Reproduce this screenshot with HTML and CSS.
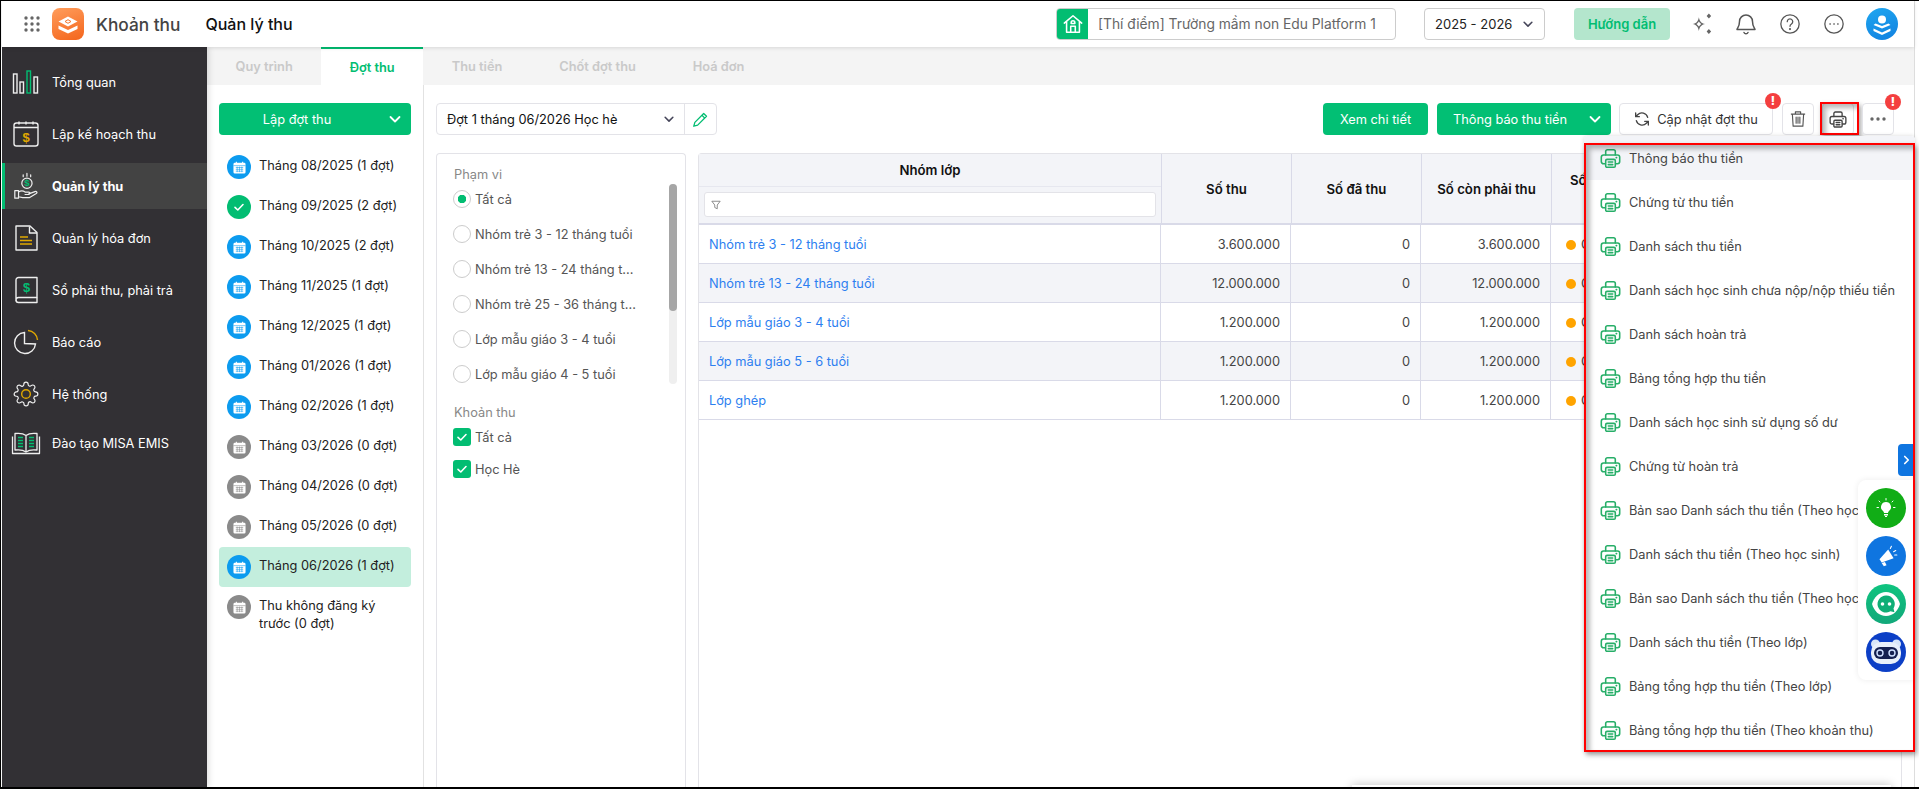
FILE: index.html
```html
<!DOCTYPE html>
<html lang="vi">
<head>
  <meta charset="UTF-8">
  <title>Khoản thu - Quản lý thu</title>
  <link rel="stylesheet" href="styles.css">
</head>
<body>

<!-- shared icons -->
<svg class="sprite" xmlns="http://www.w3.org/2000/svg">
  <symbol id="i-print" viewBox="0 0 24 24">
    <g fill="none" stroke="currentColor" stroke-width="1.8" stroke-linejoin="round" stroke-linecap="round">
      <path d="M6.5 8V4a2 2 0 0 1 2-2h7a2 2 0 0 1 2 2v4"/>
      <path d="M6 18H4a2.5 2.5 0 0 1-2.5-2.5V10.5A2.5 2.5 0 0 1 4 8h16a2.5 2.5 0 0 1 2.5 2.5V15.5A2.5 2.5 0 0 1 20 18h-2"/>
      <rect x="6.5" y="13" width="11" height="9" rx="1.5"/>
      <path d="M9.5 16h5M9.5 19h5M18.5 11h.5"/>
    </g>
  </symbol>
  <symbol id="i-cal" viewBox="0 0 14 14">
    <path fill="#fff" d="M3 .8h1.2V2h5.6V.8H11V2h1a1.5 1.5 0 0 1 1.5 1.5V12a1.5 1.5 0 0 1-1.500 1.5H2A1.5 1.5 0 0 1 .5 12V3.500A1.5 1.5 0 0 1 2 2h1z"/>
    <path fill="none" stroke="currentColor" stroke-width=".6" d="M.5 5h13M3 7h8M3 9h8M3 11h8M4.5 6v6M7 6v6M9.5 6v6"/>
  </symbol>
  <symbol id="i-check" viewBox="0 0 14 14">
    <path fill="none" stroke="#fff" stroke-width="1.6" stroke-linecap="round" stroke-linejoin="round" d="M3 7.3l2.8 2.7L11 4.5"/>
  </symbol>
  <symbol id="i-chev" viewBox="0 0 14 14">
    <path fill="none" stroke="currentColor" stroke-width="1.8" stroke-linecap="round" stroke-linejoin="round" d="M2.5 5l4.5 4.5L11.5 5"/>
  </symbol>
</svg>

<div class="app">
  <div class="window">

    <header class="topbar">
      <svg class="apps-icon" viewBox="0 0 16 16" width="16" height="16" fill="#666">
        <circle cx="2" cy="2" r="1.7"/><circle cx="8" cy="2" r="1.7"/><circle cx="14" cy="2" r="1.7"/>
        <circle cx="2" cy="8" r="1.7"/><circle cx="8" cy="8" r="1.7"/><circle cx="14" cy="8" r="1.7"/>
        <circle cx="2" cy="14" r="1.7"/><circle cx="8" cy="14" r="1.7"/><circle cx="14" cy="14" r="1.7"/>
      </svg>
      <span class="logo">
        <svg viewBox="0 0 32 32" width="32" height="32">
          <path fill="#fff" d="M6.5 17.5l9.5 4.5 9.5-4.5V21L16 25.5 6.500 21z"/>
          <path fill="#fff" d="M16 8.500l9.500 5L16 18.500l-9.500-5z"/>
          <path fill="none" stroke="#f4762b" stroke-width="1" d="M13 13.500l3-1.800 3 1.800-3 1.800z"/>
        </svg>
      </span>
      <span class="app-name">Khoản thu</span>
      <span class="page-name">Quản lý thu</span>

      <div class="school">
        <span class="school-icon">
          <svg viewBox="0 0 24 24" width="22" height="22" fill="none" stroke="#fff" stroke-width="1.7" stroke-linejoin="round" stroke-linecap="round">
            <path d="M2.5 11L12 3l9.5 8M5 9.5V21h14V9.5"/>
            <path d="M9.5 21v-6.5h5V21M10 10.5a2 2 0 1 1 4 0v1h-4z"/>
          </svg>
        </span>
        <span class="school-name">[Thí điểm] Trường mầm non Edu Platform 1</span>
      </div>
      <div class="year">
        <span>2025 - 2026</span>
        <svg class="chev-sm" width="12" height="12"><use href="#i-chev"/></svg>
      </div>
      <button class="guide">Hướng dẫn</button>

      <span class="top-icon">
        <svg viewBox="0 0 24 24" width="30" height="30" fill="#666">
          <path d="M9.5 6.5c.6 3.400 2 4.800 5 5.500-3 .7-4.400 2.100-5 5.500-.6-3.400-2-4.800-5-5.500 3-.7 4.400-2.100 5-5.500zM9.500 10l-.9 1.100-1 .9 1 .9.9 1.100.9-1.100 1-.9-1-.9z" fill-rule="evenodd"/>
          <path d="M17.500 3.500l1.800 2-1.800 2-1.800-2zM17.500 16l1.800 2-1.800 2-1.800-2z"/>
        </svg>
      </span>
      <span class="top-icon">
        <svg viewBox="0 0 24 24" width="24" height="24" fill="none" stroke="#555" stroke-width="1.5" stroke-linecap="round" stroke-linejoin="round">
          <path d="M12 3a6.500 6.500 0 0 0-6.500 6.500c0 5-2 6.500-2.500 8h18c-.5-1.500-2.500-3-2.500-8A6.500 6.500 0 0 0 12 3z"/>
          <path d="M10 20.500a2.200 2.200 0 0 0 4 0"/>
        </svg>
      </span>
      <span class="top-icon">
        <svg viewBox="0 0 24 24" width="22" height="22" fill="none" stroke="#555" stroke-width="1.4" stroke-linecap="round">
          <circle cx="12" cy="12" r="10"/>
          <path d="M9 9.500a3 3 0 1 1 4.600 2.500c-1 .7-1.600 1.200-1.600 2.500"/>
          <circle cx="12" cy="17.500" r=".5"/>
        </svg>
      </span>
      <span class="top-icon">
        <svg viewBox="0 0 24 24" width="22" height="22" fill="none" stroke="#555" stroke-width="1.4">
          <circle cx="12" cy="12" r="10"/>
          <path d="M7.500 12h.5M11.800 12h.5M16 12h.5" stroke-linecap="round"/>
        </svg>
      </span>
      <span class="avatar">
        <svg viewBox="0 0 32 32" width="32" height="32" fill="#fff">
          <circle cx="16" cy="11.500" r="4"/>
          <path d="M7.500 17l8.500 3.500 8.500-3.500-2-1.500-6.500 2.500-6.500-2.500z"/>
          <path d="M7.500 20.500l8.500 4 8.500-4V23L16 27l-8.500-4z"/>
        </svg>
      </span>
    </header>

    <div class="shell">
      <nav class="sidebar">
        <a class="nav-item">
          <svg class="nav-icon" viewBox="0 0 30 28" fill="none" stroke="#eee" stroke-width="1.4">
            <rect x="2.5" y="6" width="3.5" height="19"/><rect x="9" y="14" width="3.5" height="11"/>
            <rect x="16" y="3" width="3.5" height="22" stroke="#02bd72"/><rect x="23" y="9" width="3.5" height="16"/>
          </svg>
          <span>Tổng quan</span>
        </a>
        <a class="nav-item">
          <svg class="nav-icon" viewBox="0 0 30 28" fill="none" stroke="#eee" stroke-width="1.4">
            <rect x="3" y="3" width="24" height="23" rx="2.5"/>
            <path d="M3 7.500h24M8 1.500v3M15 1.500v3M22 1.500v3"/>
            <text class="nav-glyph" x="15" y="22" fill="#e0a800" stroke="none">$</text>
          </svg>
          <span>Lập kế hoạch thu</span>
        </a>
        <a class="nav-item active">
          <svg class="nav-icon" viewBox="0 0 30 30" fill="none" stroke="#eee" stroke-width="1.3" stroke-linecap="round" stroke-linejoin="round">
            <circle cx="16" cy="12" r="5.5"/>
            <text class="nav-glyph-sm" x="16" y="15.500" fill="#02bd72" stroke="none">$</text>
            <path d="M16 1.500v3M12 3v2M20 3v2"/>
            <path d="M3 20h4v8H3zM7 21.500c3-2 5-1.500 7 0h4a1.300 1.300 0 0 1 0 2.600h-4M18 23.500l6.500-2.500c2-.6 3 1 1.500 2l-7.500 4.500h-7L7 26.500"/>
          </svg>
          <span>Quản lý thu</span>
        </a>
        <a class="nav-item">
          <svg class="nav-icon" viewBox="0 0 30 28" fill="none" stroke="#eee" stroke-width="1.4" stroke-linejoin="round">
            <path d="M5 2h14l7 6.500V26H5z"/><path d="M18.500 2.500V9H26"/>
            <path d="M9 13h8M9 16.500h12M9 20h12" stroke="#e0a800"/>
          </svg>
          <span>Quản lý hóa đơn</span>
        </a>
        <a class="nav-item">
          <svg class="nav-icon" viewBox="0 0 30 28" fill="none" stroke="#eee" stroke-width="1.4" stroke-linejoin="round">
            <path d="M7.500 1.500H26v20H7.500A2.500 2.500 0 0 0 5 24V4a2.500 2.500 0 0 1 2.500-2.500z"/>
            <path d="M5 24a2.500 2.500 0 0 0 2.500 2.500H26v-5"/>
            <text class="nav-glyph" x="15.500" y="16" fill="#02bd72" stroke="none">$</text>
          </svg>
          <span>Sổ phải thu, phải trả</span>
        </a>
        <a class="nav-item">
          <svg class="nav-icon" viewBox="0 0 30 28" fill="none" stroke="#eee" stroke-width="1.4">
            <path d="M24.500 16A10.500 10.500 0 1 1 13.500 4.500V15.500z"/>
            <path d="M17 2.500a10 10 0 0 1 9.500 9.500" stroke="#e0a800"/>
          </svg>
          <span>Báo cáo</span>
        </a>
        <a class="nav-item">
          <svg class="nav-icon" viewBox="-1.5 -1 27 26" fill="none" stroke="#eee" stroke-width="1.1">
            <circle cx="12" cy="12" r="4" stroke="#e0a800" stroke-width="1.3"/>
            <path d="M19.4 15a1.65 1.65 0 0 0 .33 1.82l.06.06a2 2 0 0 1 0 2.83 2 2 0 0 1-2.83 0l-.06-.06a1.65 1.65 0 0 0-1.82-.33 1.65 1.65 0 0 0-1 1.51V21a2 2 0 0 1-2 2 2 2 0 0 1-2-2v-.09A1.65 1.65 0 0 0 9 19.4a1.65 1.65 0 0 0-1.82.33l-.06.06a2 2 0 0 1-2.83 0 2 2 0 0 1 0-2.83l.06-.06a1.65 1.65 0 0 0 .33-1.82 1.65 1.65 0 0 0-1.51-1H3a2 2 0 0 1-2-2 2 2 0 0 1 2-2h.09A1.65 1.65 0 0 0 4.6 9a1.65 1.65 0 0 0-.33-1.82l-.06-.06a2 2 0 0 1 0-2.83 2 2 0 0 1 2.83 0l.06.06a1.65 1.65 0 0 0 1.82.33H9a1.65 1.65 0 0 0 1-1.51V3a2 2 0 0 1 2-2 2 2 0 0 1 2 2v.09a1.65 1.65 0 0 0 1 1.51 1.65 1.65 0 0 0 1.82-.33l.06-.06a2 2 0 0 1 2.83 0 2 2 0 0 1 0 2.83l-.06.06a1.65 1.65 0 0 0-.33 1.82V9a1.65 1.65 0 0 0 1.51 1H21a2 2 0 0 1 2 2 2 2 0 0 1-2 2h-.09a1.65 1.65 0 0 0-1.51 1z"/>
          </svg>
          <span>Hệ thống</span>
        </a>
        <a class="nav-item">
          <svg class="nav-icon nav-icon-wide" viewBox="0 0 30 24" fill="none" stroke="#eee" stroke-width="1.3" stroke-linejoin="round">
            <path d="M15 4.500C12.500 2.500 8 2 4 2.500V19c4-.5 8.500 0 11 2 2.500-2 7-2.500 11-2V2.500C22 2 17.500 2.500 15 4.500zM15 4.500V21"/>
            <path d="M1.500 5.500V22.500H28.500V5.500"/>
            <path d="M7 6.500h5M7 9.500h5M7 12.500h5M7 15.500h5M18 6.500h5M18 9.500h5M18 12.500h5M18 15.500h5" stroke="#02bd72" stroke-width="1.6"/>
          </svg>
          <span>Đào tạo MISA EMIS</span>
        </a>
      </nav>

      <main class="main">
        <div class="tabs">
          <span class="tab">Quy trình</span>
          <span class="tab active">Đợt thu</span>
          <span class="tab">Thu tiền</span>
          <span class="tab">Chốt đợt thu</span>
          <span class="tab">Hoá đơn</span>
        </div>

        <div class="content">
          <aside class="months">
            <button class="btn btn-split btn-create">
              <span class="btn-label">Lập đợt thu</span>
              <svg class="chev" width="14" height="14"><use href="#i-chev"/></svg>
            </button>
            <ul class="month-list">
              <li class="month"><span class="dot blue"><svg width="13" height="13"><use href="#i-cal"/></svg></span><span class="month-text">Tháng 08/2025 (1 đợt)</span></li>
              <li class="month"><span class="dot green"><svg width="14" height="14"><use href="#i-check"/></svg></span><span class="month-text">Tháng 09/2025 (2 đợt)</span></li>
              <li class="month"><span class="dot blue"><svg width="13" height="13"><use href="#i-cal"/></svg></span><span class="month-text">Tháng 10/2025 (2 đợt)</span></li>
              <li class="month"><span class="dot blue"><svg width="13" height="13"><use href="#i-cal"/></svg></span><span class="month-text">Tháng 11/2025 (1 đợt)</span></li>
              <li class="month"><span class="dot blue"><svg width="13" height="13"><use href="#i-cal"/></svg></span><span class="month-text">Tháng 12/2025 (1 đợt)</span></li>
              <li class="month"><span class="dot blue"><svg width="13" height="13"><use href="#i-cal"/></svg></span><span class="month-text">Tháng 01/2026 (1 đợt)</span></li>
              <li class="month"><span class="dot blue"><svg width="13" height="13"><use href="#i-cal"/></svg></span><span class="month-text">Tháng 02/2026 (1 đợt)</span></li>
              <li class="month"><span class="dot gray"><svg width="13" height="13"><use href="#i-cal"/></svg></span><span class="month-text">Tháng 03/2026 (0 đợt)</span></li>
              <li class="month"><span class="dot gray"><svg width="13" height="13"><use href="#i-cal"/></svg></span><span class="month-text">Tháng 04/2026 (0 đợt)</span></li>
              <li class="month"><span class="dot gray"><svg width="13" height="13"><use href="#i-cal"/></svg></span><span class="month-text">Tháng 05/2026 (0 đợt)</span></li>
              <li class="month selected"><span class="dot blue"><svg width="13" height="13"><use href="#i-cal"/></svg></span><span class="month-text">Tháng 06/2026 (1 đợt)</span></li>
              <li class="month"><span class="dot gray"><svg width="13" height="13"><use href="#i-cal"/></svg></span><span class="month-text">Thu không đăng ký trước (0 đợt)</span></li>
            </ul>
          </aside>

          <section class="detail">
            <div class="toolbar">
              <div class="period">
                <div class="period-select">
                  <span>Đợt 1 tháng 06/2026 Học hè</span>
                  <svg class="chev-sm" width="12" height="12"><use href="#i-chev"/></svg>
                </div>
                <span class="period-edit">
                  <svg viewBox="0 0 24 24" width="17" height="17" fill="none" stroke="#02bd72" stroke-width="1.8" stroke-linejoin="round">
                    <path d="M16.500 3.500l4 4L8 20l-5.500 1.500L4 16z"/><path d="M14 6l4 4"/>
                  </svg>
                </span>
              </div>
              <div class="actions">
                <button class="btn btn-view">Xem chi tiết</button>
                <button class="btn btn-split btn-notify">
                  <span class="btn-label">Thông báo thu tiền</span>
                  <svg class="chev" width="14" height="14"><use href="#i-chev"/></svg>
                </button>
                <button class="btn-outline btn-update">
                  <svg viewBox="0 0 24 24" width="16" height="16" fill="none" stroke="#444" stroke-width="2" stroke-linecap="round" stroke-linejoin="round">
                    <path d="M20.500 9.500A9 9 0 0 0 5.500 5.500L2.500 8.500M2.500 3v5.500H8"/>
                    <path d="M3.500 14.500a9 9 0 0 0 15 4l3-3M21.500 21v-5.500H16"/>
                  </svg>
                  Cập nhật đợt thu
                  <span class="badge">!</span>
                </button>
                <button class="btn-outline btn-icon">
                  <svg viewBox="0 0 24 24" width="24" height="24" fill="none" stroke="#555" stroke-width="1.5" stroke-linejoin="round">
                    <path d="M2.500 5.500h19M8.500 5.500V2.500h7v3M4.500 5.500l1 16h13l1-16"/>
                    <path d="M9.500 9.500v8M12 9.500v8M14.500 9.500v8" stroke-linecap="round"/>
                  </svg>
                </button>
                <button class="btn-outline btn-icon btn-print">
                  <svg class="print-dark" width="21" height="21"><use href="#i-print"/></svg>
                  <span class="mark mark-print"></span>
                </button>
                <button class="btn-outline btn-icon btn-more">
                  <svg viewBox="0 0 16 4" width="16" height="4" fill="#666"><circle cx="2" cy="2" r="1.7"/><circle cx="8" cy="2" r="1.7"/><circle cx="14" cy="2" r="1.7"/></svg>
                  <span class="badge">!</span>
                </button>
              </div>
            </div>

            <div class="panels">
              <div class="filters">
                <div class="filter-label">Phạm vi</div>
                <div class="scope">
                  <div class="scope-list">
                    <label class="opt"><span class="radio on"></span>Tất cả</label>
                    <label class="opt"><span class="radio"></span>Nhóm trẻ 3 - 12 tháng tuổi</label>
                    <label class="opt"><span class="radio"></span>Nhóm trẻ 13 - 24 tháng t...</label>
                    <label class="opt"><span class="radio"></span>Nhóm trẻ 25 - 36 tháng t...</label>
                    <label class="opt"><span class="radio"></span>Lớp mẫu giáo 3 - 4 tuổi</label>
                    <label class="opt"><span class="radio"></span>Lớp mẫu giáo 4 - 5 tuổi</label>
                  </div>
                  <div class="scroll-track"><div class="scroll-thumb"></div></div>
                </div>
                <div class="filter-label filter-label-fee">Khoản thu</div>
                <div class="fee-list">
                  <label class="opt"><span class="checkbox"><svg width="14" height="14"><use href="#i-check"/></svg></span>Tất cả</label>
                  <label class="opt"><span class="checkbox"><svg width="14" height="14"><use href="#i-check"/></svg></span>Học Hè</label>
                </div>
              </div>

              <div class="grid">
                <table class="grid-head">
                  <colgroup><col class="c1-head"><col class="cn"><col class="cn"><col class="cn"><col></colgroup>
                  <tr>
                    <th class="th-group">
                      <div class="th-title">Nhóm lớp</div>
                      <div class="th-filter">
                        <div class="filter-input">
                          <svg viewBox="0 0 12 12" width="10" height="10" fill="none" stroke="#777" stroke-width="1" stroke-linejoin="round"><path d="M1 1.500h10L7.500 6v4.500l-3-1.500V6z"/></svg>
                        </div>
                      </div>
                    </th>
                    <th>Số thu</th>
                    <th>Số đã thu</th>
                    <th>Số còn phải thu</th>
                    <th class="th-last">Số</th>
                  </tr>
                </table>
                <table class="grid-body">
                  <colgroup><col class="c1-body"><col class="cn"><col class="cn"><col class="cn"><col></colgroup>
                  <tr><td><a class="row-link">Nhóm trẻ 3 - 12 tháng tuổi</a></td><td class="num">3.600.000</td><td class="num">0</td><td class="num">3.600.000</td><td class="status"><i class="status-dot"></i>Chưa</td></tr>
                  <tr><td><a class="row-link">Nhóm trẻ 13 - 24 tháng tuổi</a></td><td class="num">12.000.000</td><td class="num">0</td><td class="num">12.000.000</td><td class="status"><i class="status-dot"></i>Chưa</td></tr>
                  <tr><td><a class="row-link">Lớp mẫu giáo 3 - 4 tuổi</a></td><td class="num">1.200.000</td><td class="num">0</td><td class="num">1.200.000</td><td class="status"><i class="status-dot"></i>Chưa</td></tr>
                  <tr><td><a class="row-link">Lớp mẫu giáo 5 - 6 tuổi</a></td><td class="num">1.200.000</td><td class="num">0</td><td class="num">1.200.000</td><td class="status"><i class="status-dot"></i>Chưa</td></tr>
                  <tr><td><a class="row-link">Lớp ghép</a></td><td class="num">1.200.000</td><td class="num">0</td><td class="num">1.200.000</td><td class="status"><i class="status-dot"></i>Chưa</td></tr>
                </table>
              </div>
            </div>
          </section>
        </div>
      </main>
    </div>
  </div>

  <!-- print dropdown, open over the grid -->
  <div class="print-menu">
    <ul class="print-list">
      <li class="print-item hover"><svg width="21" height="21"><use href="#i-print"/></svg>Thông báo thu tiền</li>
      <li class="print-item"><svg width="21" height="21"><use href="#i-print"/></svg>Chứng từ thu tiền</li>
      <li class="print-item"><svg width="21" height="21"><use href="#i-print"/></svg>Danh sách thu tiền</li>
      <li class="print-item"><svg width="21" height="21"><use href="#i-print"/></svg>Danh sách học sinh chưa nộp/nộp thiếu tiền</li>
      <li class="print-item"><svg width="21" height="21"><use href="#i-print"/></svg>Danh sách hoàn trả</li>
      <li class="print-item"><svg width="21" height="21"><use href="#i-print"/></svg>Bảng tổng hợp thu tiền</li>
      <li class="print-item"><svg width="21" height="21"><use href="#i-print"/></svg>Danh sách học sinh sử dụng số dư</li>
      <li class="print-item"><svg width="21" height="21"><use href="#i-print"/></svg>Chứng từ hoàn trả</li>
      <li class="print-item"><svg width="21" height="21"><use href="#i-print"/></svg>Bản sao Danh sách thu tiền (Theo học sinh)</li>
      <li class="print-item"><svg width="21" height="21"><use href="#i-print"/></svg>Danh sách thu tiền (Theo học sinh)</li>
      <li class="print-item"><svg width="21" height="21"><use href="#i-print"/></svg>Bản sao Danh sách thu tiền (Theo học sinh)</li>
      <li class="print-item"><svg width="21" height="21"><use href="#i-print"/></svg>Danh sách thu tiền (Theo lớp)</li>
      <li class="print-item"><svg width="21" height="21"><use href="#i-print"/></svg>Bảng tổng hợp thu tiền (Theo lớp)</li>
      <li class="print-item"><svg width="21" height="21"><use href="#i-print"/></svg>Bảng tổng hợp thu tiền (Theo khoản thu)</li>
    </ul>
  </div>

  <!-- floating helpers on the right edge -->
  <span class="dock-toggle">
    <svg viewBox="0 0 10 14" width="7" height="10" fill="none" stroke="#fff" stroke-width="2.4" stroke-linecap="round" stroke-linejoin="round"><path d="M2.500 2l5 5-5 5"/></svg>
  </span>
  <div class="dock">
    <span class="dock-btn bulb">
      <svg viewBox="0 0 24 24" width="24" height="24" fill="#fff">
        <path d="M12 6a5 5 0 0 0-3 9c.7.6 1 1.200 1 2h4c0-.8.3-1.400 1-2a5 5 0 0 0-3-9z"/>
        <path d="M10 18h4v1.500h-4zM11 20h2v1h-2z"/>
        <path d="M12 2.500V4M5 5l1 1M19 5l-1 1M3 11.500h1.500M19.500 11.500H21" stroke="#fff" stroke-width="1" stroke-linecap="round"/>
      </svg>
    </span>
    <span class="dock-btn horn">
      <svg viewBox="0 0 24 24" width="26" height="26" fill="#fff">
        <path d="M14 6l5 8-11 4-2-3z"/><path d="M8 18.500l3-1 1.500 3-2.500 1z"/>
        <path d="M16 5l1-2M19 8l2-1M20 11h2" stroke="#fff" stroke-width="1" stroke-linecap="round"/>
      </svg>
    </span>
    <span class="dock-btn chat">
      <svg viewBox="0 0 40 40" width="40" height="40">
        <path fill="#fff" d="M20 8c7 0 12 5 14 12-2 7-7 12-14 12S8 27 6 20c2-7 7-12 14-12z"/>
        <path fill="#0fae76" d="M20 11.500a8.500 8.500 0 1 0 4.500 15.700l4 1-1-3.800A8.500 8.500 0 0 0 20 11.500z"/>
        <circle cx="16.500" cy="20" r="1.800" fill="#fff"/><circle cx="23.500" cy="20" r="1.800" fill="#fff"/>
      </svg>
    </span>
    <span class="dock-btn bot">
      <svg viewBox="0 0 40 40" width="40" height="40">
        <circle cx="9.500" cy="12" r="4.500" fill="#d8e6f8"/><circle cx="30.500" cy="12" r="4.500" fill="#d8e6f8"/>
        <rect x="5" y="10" width="30" height="22" rx="10" fill="#e8f0fa"/>
        <rect x="8" y="15" width="24" height="12" rx="6" fill="#14204f"/>
        <circle cx="14" cy="21" r="3" fill="none" stroke="#cfe0ff" stroke-width="1.4"/>
        <circle cx="26" cy="21" r="3" fill="none" stroke="#cfe0ff" stroke-width="1.4"/>
      </svg>
    </span>
  </div>

  <span class="mark mark-menu"></span>
  <div class="bottom-sheet"></div>
</div>

</body>
</html>
```

FILE: styles.css
```css
* { box-sizing: border-box; }
html, body { margin: 0; height: 100%; overflow: hidden; background: #fff; }
body { font-family: Inter, "Noto Sans", sans-serif; font-size: 12.8px; color: #222; }
ul { list-style: none; margin: 0; padding: 0; }
button { font-family: inherit; font-size: 12.8px; cursor: pointer; }
a { text-decoration: none; }
.sprite { display: none; }

/* frame */
.app { position: relative; width: 1919px; height: 789px; overflow: hidden; border-top: 1px solid #000; border-left: 1px solid #000; border-bottom: 2px solid #000; padding: 0 4px 0 1px; }
.window { display: flex; flex-direction: column; height: 100%; border-right: 1px solid #ddd; }

/* top bar */
.topbar { position: relative; z-index: 3; flex: none; display: flex; align-items: center; height: 46px; padding: 0 16px 0 22px; background: #fff; box-shadow: 0 1px 4px rgba(0,0,0,.12); }
.apps-icon { flex: none; margin-right: 12px; }
.logo { flex: none; width: 32px; height: 32px; border-radius: 8px; background: linear-gradient(160deg, #ff9d5c, #f4651c); }
.logo svg { display: block; }
.app-name { margin-left: 12px; font-size: 17.3px; font-weight: 500; color: #444; }
.page-name { margin-left: 25px; font-size: 16px; font-weight: 500; color: #111; }
.school { display: flex; align-items: center; width: 340px; height: 32px; margin-left: auto; border: 1px solid #ccc; border-radius: 4px; overflow: hidden; }
.school-icon { display: flex; align-items: center; justify-content: center; flex: none; width: 31px; height: 100%; background: #02bd72; }
.school-name { margin-left: 10px; font-size: 13.8px; color: #666; white-space: nowrap; }
.year { display: flex; align-items: center; justify-content: space-between; width: 121px; height: 32px; margin-left: 28px; padding: 0 10px; border: 1px solid #ccc; border-radius: 4px; font-size: 13px; color: #222; }
.chev-sm { color: #454559; flex: none; }
.guide { width: 96px; height: 32px; margin-left: 29px; border: 0; border-radius: 4px; background: #b4e6cd; color: #02bd72; font-weight: 600; font-size: 13px; }
.top-icon { display: flex; align-items: center; justify-content: center; flex: none; width: 44px; }
.guide + .top-icon { margin-left: 10px; }
.avatar { flex: none; width: 32px; height: 32px; margin-left: 10px; border-radius: 50%; background: linear-gradient(160deg, #1ea7f0, #1180e0); }
.avatar svg { display: block; }

/* sidebar */
.shell { flex: 1; display: flex; min-height: 0; }
.sidebar { position: relative; z-index: 2; flex: none; width: 205px; padding-top: 12px; background: #323034; box-shadow: 2px 0 6px rgba(0,0,0,.12); }
.nav-item { display: flex; align-items: center; height: 46px; margin-bottom: 6px; padding-left: 6px; border-left: 3px solid transparent; color: #fff; }
.nav-item:last-child { margin-top: -3px; }
.nav-item.active { border-left-color: #02bd72; background: #434343; font-weight: 700; }
.nav-icon { flex: none; width: 30px; height: 28px; margin-right: 11px; }
.nav-icon-wide { width: 30px; height: 24px; }
.nav-glyph { font-family: "Liberation Sans", sans-serif; font-size: 13px; font-weight: 700; text-anchor: middle; }
.nav-glyph-sm { font-family: "Liberation Sans", sans-serif; font-size: 10px; font-weight: 700; text-anchor: middle; }

/* tabs */
.main { flex: 1; display: flex; flex-direction: column; min-width: 0; }
.tabs { flex: none; display: flex; height: 38px; background: #f4f4f4; }
.tab { display: flex; align-items: center; padding: 0 28.5px; font-weight: 600; color: #c9c9c9; }
.tab.active { border-top: 2px solid #02bd72; background: #fff; color: #02bd72; }
.content { flex: 1; display: flex; min-height: 0; }

/* month column */
.months { flex: none; width: 217px; padding: 18px 12px 0; border-right: 1px solid #e2e2e2; }
.btn { height: 32px; border: 0; border-radius: 4px; background: #02bf74; color: #fff; }
.btn-split { position: relative; display: flex; align-items: center; justify-content: center; }
.chev { position: absolute; right: 9px; top: 9px; color: #fff; }
.btn-create { width: 192px; padding-right: 42px; }
.month-list { margin-top: 12px; }
.month { display: flex; align-items: flex-start; gap: 8px; min-height: 40px; padding: 8px; border-radius: 4px; color: #222; }
.month.selected { background: #c3eedd; }
.month-text { padding-top: 2px; line-height: 18px; }
.dot { display: flex; align-items: center; justify-content: center; flex: none; width: 24px; height: 24px; border-radius: 50%; }
.dot.blue { background: #0c9bef; color: #0c9bef; }
.dot.green { background: #02bd72; }
.dot.gray { background: #8a8a8a; color: #8a8a8a; }

/* toolbar */
.detail { flex: 1; display: flex; flex-direction: column; min-width: 0; padding: 18px 12px 0; }
.toolbar { flex: none; display: flex; justify-content: space-between; height: 32px; }
.period { display: flex; width: 281px; border: 1px solid #e3e3e8; border-radius: 4px; }
.period-select { flex: 1; display: flex; align-items: center; justify-content: space-between; padding: 0 9px 0 10px; border-right: 1px solid #e3e3e8; color: #111; }
.period-edit { display: flex; align-items: center; justify-content: center; width: 31px; }
.actions { display: flex; margin-right: 8px; }
.btn-view { width: 105px; margin-right: 9px; }
.btn-notify { width: 174px; margin-right: 8px; padding-right: 34px; }
.btn-outline { position: relative; display: flex; align-items: center; justify-content: center; height: 32px; border: 1px solid #e3e3e8; border-radius: 4px; background: #fff; color: #333; }
.btn-update { width: 154px; gap: 7px; margin-right: 9px; }
.btn-icon { width: 32px; margin-right: 8px; }
.btn-more { margin-right: 0; }
.print-dark { color: #444; }
.badge { position: absolute; top: -11px; right: -9px; width: 16px; height: 16px; border-radius: 50%; background: #f43f3f; color: #fff; font-size: 12px; font-weight: 800; line-height: 16px; text-align: center; }
.btn-more .badge { top: -10px; right: -8px; }

/* annotation boxes drawn on the capture */
.mark { position: absolute; border: 2px solid #f00; pointer-events: none; box-shadow: 2px 3px 5px rgba(0,0,0,.35), inset 4px 4px 5px rgba(0,0,0,.28); }
.mark-print { left: -3px; right: -6px; top: -2px; bottom: -1px; }
.mark-menu { z-index: 7; left: 1583px; top: 142px; width: 331px; height: 609px; }

/* panels */
.panels { flex: 1; display: flex; gap: 12px; margin-top: 18px; min-height: 0; }
.filters { flex: none; width: 250px; padding: 12px 8px 0 16px; border: 1px solid #e3e3e8; border-bottom: 0; border-radius: 4px 4px 0 0; color: #555; }
.filter-label { line-height: 18px; padding-left: 1px; color: #888; }
.filter-label-fee { margin-top: 20px; }
.scope { display: flex; height: 200px; }
.scope-list { flex: 1; padding-top: 6px; }
.opt { display: flex; align-items: center; gap: 4px; height: 18px; margin-bottom: 17px; white-space: nowrap; }
.radio { flex: none; width: 18px; height: 18px; border: 1px solid #ccc; border-radius: 50%; background: #fff; }
.radio.on { background: radial-gradient(circle, #02bd72 0 4px, #fff 4.5px); }
.scroll-track { flex: none; width: 8px; border-radius: 4px; background: #efefef; }
.scroll-thumb { height: 127px; border-radius: 4px; background: #a6a6a6; }
.fee-list { margin-top: 6px; }
.fee-list .opt { margin-bottom: 14px; }
.checkbox { display: flex; align-items: center; justify-content: center; flex: none; width: 18px; height: 18px; border-radius: 3px; background: #02bd72; }

/* grid */
.grid { flex: 1; min-width: 0; border: 1px solid #e3e3e8; border-bottom: 0; border-radius: 4px 4px 0 0; }
.grid table { width: 100%; table-layout: fixed; border-collapse: separate; border-spacing: 0; }
.c1-head { width: 463px; }
.c1-body { width: 462px; }
.cn { width: 130px; }
.grid-head th { height: 71px; padding: 0; border-right: 1px solid #d9dae8; border-bottom: 2px solid #d9dae8; background: #f3f4f8; font-size: 13.2px; font-weight: 600; color: #111; }
.grid-head .th-last { padding: 0 0 18px 18px; border-right: 0; text-align: left; }
.th-title { display: flex; align-items: center; justify-content: center; height: 33px; border-bottom: 1px solid #e6e7ef; }
.th-filter { height: 36px; padding: 5px 5px 0; }
.filter-input { display: flex; align-items: center; height: 25px; padding-left: 6px; border: 1px solid #e3e3e8; border-radius: 3px; background: #fff; }
.grid-body td { height: 39px; padding: 0 10px; border-right: 1px solid #d9dae8; border-bottom: 1px solid #d9dae8; white-space: nowrap; }
.grid-body tr:nth-child(even) td { background: #f3f4f8; }
.grid-body td.status { padding-left: 15px; border-right: 0; color: #444; }
.row-link { color: #2d7ff0; }
.num { text-align: right; color: #444; }
.status-dot { display: inline-block; width: 10px; height: 10px; margin-right: 5px; border-radius: 50%; background: #ffa400; vertical-align: -1px; }

/* print menu */
.print-menu { position: absolute; z-index: 5; left: 1583px; top: 135px; width: 331px; height: 616px; border-radius: 4px; background: #fff; box-shadow: 0 0 4px rgba(0,0,0,.15); overflow: hidden; }
.print-item { display: flex; align-items: center; gap: 8px; height: 44px; padding-left: 16px; color: #444; white-space: nowrap; }
.print-item svg { flex: none; color: #27ae68; }
.print-item.hover { background: #f3f4f8; }

/* dock */
.dock-toggle { position: absolute; z-index: 6; left: 1897px; top: 443px; display: flex; align-items: center; justify-content: center; width: 17px; height: 32px; border-radius: 4px 0 0 4px; background: #0f75e0; }
.dock { position: absolute; z-index: 6; left: 1857px; top: 479px; display: flex; flex-direction: column; gap: 8px; width: 57px; height: 200px; padding: 8px 0 0 8px; border-radius: 8px 0 0 8px; background: #fff; box-shadow: 0 0 6px rgba(0,0,0,.08); }
.dock-btn { display: flex; align-items: center; justify-content: center; width: 40px; height: 40px; border-radius: 50%; overflow: hidden; }
.dock-btn.bulb { background: #11ad16; }
.dock-btn.horn { background: #0f75e0; }
.dock-btn.chat { background: linear-gradient(#0fc47f, #12a87a); }
.dock-btn.bot { background: #0c3fc6; }

.bottom-sheet { position: absolute; left: 1351px; right: 28px; bottom: -6px; height: 8px; background: #fff; box-shadow: 0 0 10px rgba(0,0,0,.25); }
```
